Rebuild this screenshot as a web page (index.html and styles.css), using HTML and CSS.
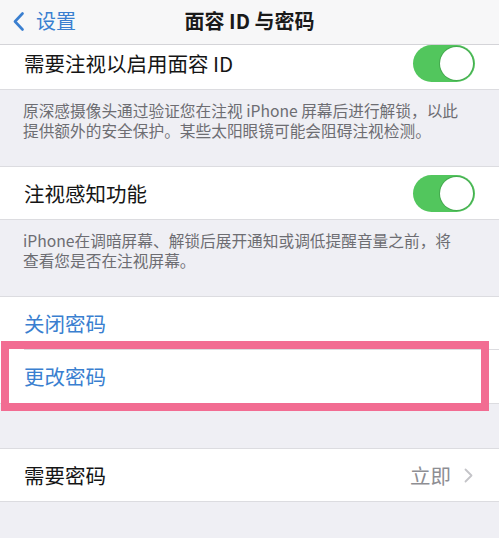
FILE: index.html
```html
<!DOCTYPE html>
<html lang="zh-CN">
<head>
<meta charset="utf-8">
<title>面容 ID 与密码</title>
<link rel="stylesheet" href="styles.css">
</head>
<body>
<header class="nav">
  <a class="back">
    <svg class="back-icon" width="11" height="19" viewBox="0 0 11 19"><path d="M9.5 1.5 L2 9.5 L9.5 17.5" fill="none" stroke="currentColor" stroke-width="2.6" stroke-linecap="round" stroke-linejoin="round"/></svg>
    <span>设置</span>
  </a>
  <h1 class="title">面容 ID 与密码</h1>
  <span class="spacer"></span>
</header>

<section class="group group-first">
  <div class="row">
    <span class="label">需要注视以启用面容 ID</span>
    <span class="toggle"><span class="knob"></span></span>
  </div>
</section>
<p class="note">原深感摄像头通过验证您在注视 iPhone 屏幕后进行解锁，以此提供额外的安全保护。某些太阳眼镜可能会阻碍注视检测。</p>

<section class="group">
  <div class="row">
    <span class="label">注视感知功能</span>
    <span class="toggle"><span class="knob"></span></span>
  </div>
</section>
<p class="note">iPhone在调暗屏幕、解锁后展开通知或调低提醒音量之前，将查看您是否在注视屏幕。</p>

<section class="group">
  <div class="row row-tall row-sep">
    <span class="label link">关闭密码</span>
  </div>
  <div class="row row-tall">
    <span class="label link">更改密码</span>
    <span class="highlight"></span>
  </div>
</section>

<section class="group group-spaced">
  <div class="row">
    <span class="label">需要密码</span>
    <span class="detail">立即
      <svg class="chev" width="9" height="15" viewBox="0 0 9 15"><path d="M1.5 1.5 L7.5 7.5 L1.5 13.5" fill="none" stroke="currentColor" stroke-width="1.8" stroke-linecap="round" stroke-linejoin="round"/></svg>
    </span>
  </div>
</section>
</body>
</html>
```
FILE: styles.css
```css
* { box-sizing: border-box; }

html, body {
  margin: 0;
  padding: 0;
}

body {
  width: 499px;
  height: 538px;
  overflow: hidden;
  background: #efeff4;
  font-family: "Noto Sans CJK SC", "Noto Sans", "Liberation Sans", sans-serif;
  color: #151515;
}

.nav {
  position: relative;
  z-index: 2;
  height: 45px;
  background: #f7f7f8;
  border-bottom: 1px solid #d4d4d8;
  display: grid;
  grid-template-columns: 1fr auto 1fr;
  align-items: center;
  padding: 0 0 2px 0;
}

.back {
  display: flex;
  align-items: center;
  gap: 12px;
  padding-left: 13px;
  color: #3a7fd0;
  font-size: 20px;
  line-height: 1;
}

.back-icon { display: block; }

.title {
  margin: 0;
  font-size: 20px;
  font-weight: 600;
  color: #1a1a1a;
  line-height: 1;
}

.group {
  background: #fff;
  border-top: 1px solid #dcdce0;
  border-bottom: 1px solid #dcdce0;
}

.group-first {
  margin-top: -9px;
}

.group-spaced {
  margin-top: 44px;
}

.row {
  position: relative;
  height: 52px;
  display: flex;
  align-items: center;
  justify-content: space-between;
  padding: 0 24px 0 24px;
}

.row-tall { height: 53px; }

.row-sep::after {
  content: "";
  position: absolute;
  left: 24px;
  right: 0;
  bottom: 0;
  height: 1px;
  background: #dcdce0;
}

.label {
  font-size: 20.5px;
  line-height: 1;
  color: #151515;
}

.link { color: #3a7fd0; }

.toggle {
  position: relative;
  width: 62px;
  height: 37px;
  border-radius: 19px;
  background: #52c65d;
  flex: none;
  margin-right: 0;
}

.knob {
  position: absolute;
  right: 2px;
  top: 2px;
  width: 33px;
  height: 33px;
  border-radius: 50%;
  background: #fff;
  box-shadow: 0 0 0 1px rgba(60, 150, 70, 0.6);
}

.note {
  margin: 0;
  padding: 11px 39px 25px 23px;
  font-size: 15.7px;
  line-height: 20px;
  color: #6d6d72;
}

.detail {
  display: flex;
  align-items: center;
  gap: 13px;
  font-size: 20.5px;
  line-height: 1;
  color: #8e8e93;
  margin-right: 2px;
}

.chev {
  display: block;
  color: #c4c4c8;
}

.highlight {
  position: absolute;
  left: 1px;
  top: -9px;
  width: 488px;
  height: 70px;
  border: 8px solid #f26c92;
  pointer-events: none;
}
```
